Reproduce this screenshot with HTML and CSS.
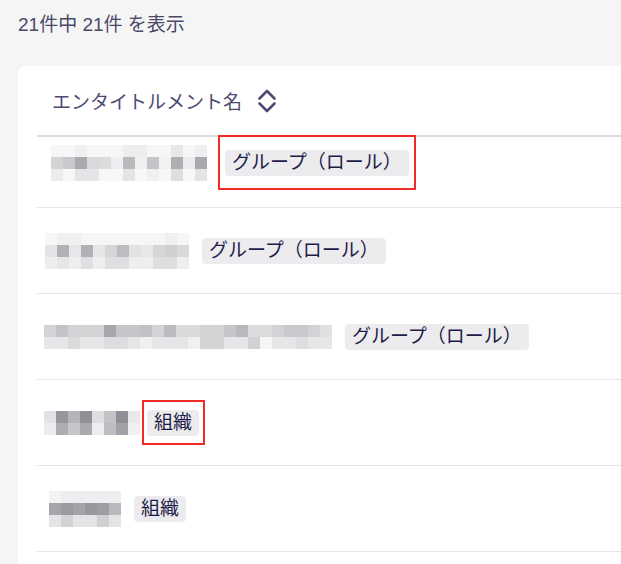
FILE: index.html
```html
<!DOCTYPE html>
<html lang="ja">
<head>
  <meta charset="utf-8">
  <title>エンタイトルメント</title>
  <link rel="stylesheet" href="styles.css">
</head>
<body>
  <p class="summary">21件中 21件 を表示</p>

  <div class="card">
    <div class="head">
      <span class="head-label">エンタイトルメント名</span>
      <svg class="sort" width="20" height="24" viewBox="0 0 20 24" fill="none" stroke="currentColor" stroke-width="2.6" stroke-linecap="round" stroke-linejoin="round">
        <path d="M2.5 9.5 L10 2 L17.5 9.5"/>
        <path d="M2.5 14.5 L10 22 L17.5 14.5"/>
      </svg>
    </div>

    <!-- 名前はモザイク処理 -->
    <div class="row row-first">
      <div class="cell">
        <svg class="blur m1" width="156" height="36" viewBox="0 0 13 3" shape-rendering="crispEdges">
          <rect width="13" height="1" fill="#f6f6f7"/>
          <rect x="2" width="1" height="1" fill="#efeff1"/><rect x="6" width="2" height="1" fill="#ededef"/><rect x="10" width="1" height="1" fill="#e8e8ea"/><rect x="12" width="1" height="1" fill="#efeff1"/>
          <rect y="1" width="1" height="1" fill="#d4d4d7"/><rect x="1" y="1" width="1" height="1" fill="#c9c9cd"/><rect x="2" y="1" width="1" height="1" fill="#a9a9af"/><rect x="3" y="1" width="1" height="1" fill="#d9d9dc"/><rect x="4" y="1" width="1" height="1" fill="#dcdcdf"/><rect x="5" y="1" width="1" height="1" fill="#eeeef0"/><rect x="6" y="1" width="1" height="1" fill="#b9b9be"/><rect x="7" y="1" width="1" height="1" fill="#f0f0f0"/><rect x="8" y="1" width="1" height="1" fill="#c4c4c8"/><rect x="9" y="1" width="1" height="1" fill="#f1f1f1"/><rect x="10" y="1" width="1" height="1" fill="#aeaeb3"/><rect x="11" y="1" width="1" height="1" fill="#ececee"/><rect x="12" y="1" width="1" height="1" fill="#a9a9ae"/>
          <rect y="2" width="13" height="1" fill="#f7f7f8"/>
          <rect y="2" width="1" height="1" fill="#ececee"/><rect x="2" y="2" width="2" height="1" fill="#e5e5e7"/><rect x="6" y="2" width="1" height="1" fill="#e4e4e6"/><rect x="8" y="2" width="1" height="1" fill="#f0f0f2"/><rect x="10" y="2" width="1" height="1" fill="#dedee1"/><rect x="12" y="2" width="1" height="1" fill="#e4e4e6"/>
        </svg>
        <span class="tag flag flag-wide">グループ（ロール）</span>
      </div>
    </div>

    <div class="row">
      <div class="cell">
        <svg class="blur m2" width="144" height="36" viewBox="0 0 12 3" shape-rendering="crispEdges">
          <rect width="12" height="1" fill="#f6f6f7"/>
          <rect x="1" width="2" height="1" fill="#f0f0f1"/><rect x="10" width="1" height="1" fill="#efeff0"/>
          <rect y="1" width="1" height="1" fill="#e4e4e6"/><rect x="1" y="1" width="1" height="1" fill="#b0b0b5"/><rect x="2" y="1" width="1" height="1" fill="#e7e7e9"/><rect x="3" y="1" width="1" height="1" fill="#b1b1b6"/><rect x="4" y="1" width="1" height="1" fill="#e6e6e8"/><rect x="5" y="1" width="1" height="1" fill="#d6d6d9"/><rect x="6" y="1" width="1" height="1" fill="#bdbdc1"/><rect x="7" y="1" width="1" height="1" fill="#e3e3e5"/><rect x="8" y="1" width="1" height="1" fill="#e8e8ea"/><rect x="9" y="1" width="1" height="1" fill="#d6d6d9"/><rect x="10" y="1" width="1" height="1" fill="#cfcfd2"/><rect x="11" y="1" width="1" height="1" fill="#d9d9dc"/>
          <rect y="2" width="12" height="1" fill="#eeeef0"/>
          <rect x="1" y="2" width="1" height="1" fill="#e6e6e8"/><rect x="3" y="2" width="1" height="1" fill="#e0e0e2"/><rect x="5" y="2" width="2" height="1" fill="#dfdfe2"/><rect x="9" y="2" width="2" height="1" fill="#dedee1"/>
        </svg>
        <span class="tag">グループ（ロール）</span>
      </div>
    </div>

    <div class="row">
      <div class="cell">
        <svg class="blur m3" width="288" height="24" viewBox="0 0 24 2" shape-rendering="crispEdges">
          <rect width="24" height="1" fill="#d3d3d6"/>
          <rect x="1" width="1" height="1" fill="#c3c3c7"/><rect x="5" width="1" height="1" fill="#a6a6ac"/><rect x="6" width="2" height="1" fill="#c6c6ca"/><rect x="8" width="1" height="1" fill="#c2c2c6"/><rect x="10" width="1" height="1" fill="#bcbcc0"/><rect x="11" width="2" height="1" fill="#dadadd"/><rect x="15" width="1" height="1" fill="#c6c6ca"/><rect x="16" width="1" height="1" fill="#b9b9bd"/><rect x="17" width="2" height="1" fill="#dbdbde"/><rect x="20" width="2" height="1" fill="#c9c9cd"/><rect x="23" width="1" height="1" fill="#e0e0e2"/>
          <rect y="1" width="24" height="1" fill="#e6e6e8"/>
          <rect x="2" y="1" width="1" height="1" fill="#dadadd"/><rect x="5" y="1" width="2" height="1" fill="#dddde0"/><rect x="8" y="1" width="1" height="1" fill="#f0f0f1"/><rect x="12" y="1" width="1" height="1" fill="#f0f0f1"/><rect x="13" y="1" width="2" height="1" fill="#d5d5d8"/><rect x="17" y="1" width="1" height="1" fill="#d2d2d5"/><rect x="18" y="1" width="1" height="1" fill="#f6f6f6"/><rect x="21" y="1" width="1" height="1" fill="#dedee1"/>
        </svg>
        <span class="tag">グループ（ロール）</span>
      </div>
    </div>

    <div class="row">
      <div class="cell">
        <svg class="blur m4" width="96" height="24" viewBox="0 0 8 2" shape-rendering="crispEdges">
          <rect y="0" width="1" height="1" fill="#e2e2e4"/><rect x="1" width="1" height="1" fill="#95959c"/><rect x="2" width="1" height="1" fill="#b5b5b9"/><rect x="3" width="1" height="1" fill="#909097"/><rect x="4" width="1" height="1" fill="#dedee0"/><rect x="5" width="1" height="1" fill="#c3c3c7"/><rect x="6" width="1" height="1" fill="#8f8f96"/><rect x="7" width="1" height="1" fill="#e8e8ea"/>
          <rect y="1" width="1" height="1" fill="#ececee"/><rect x="1" y="1" width="1" height="1" fill="#adadb2"/><rect x="2" y="1" width="1" height="1" fill="#c6c6ca"/><rect x="3" y="1" width="1" height="1" fill="#a9a9ae"/><rect x="4" y="1" width="1" height="1" fill="#ededef"/><rect x="5" y="1" width="1" height="1" fill="#bdbdc1"/><rect x="6" y="1" width="1" height="1" fill="#a1a1a7"/><rect x="7" y="1" width="1" height="1" fill="#f0f0f0"/>
        </svg>
        <span class="tag flag flag-narrow">組織</span>
      </div>
    </div>

    <div class="row">
      <div class="cell">
        <svg class="blur m5" width="72" height="36" viewBox="0 0 6 3" shape-rendering="crispEdges">
          <rect width="6" height="1" fill="#eeeef0"/><rect width="1" height="1" fill="#f4f4f5"/>
          <rect y="1" width="1" height="1" fill="#a5a5ab"/><rect x="1" y="1" width="1" height="1" fill="#9a9aa1"/><rect x="2" y="1" width="1" height="1" fill="#a3a3a9"/><rect x="3" y="1" width="1" height="1" fill="#97979e"/><rect x="4" y="1" width="1" height="1" fill="#9d9da3"/><rect x="5" y="1" width="1" height="1" fill="#b9b9bd"/>
          <rect y="2" width="6" height="1" fill="#e4e4e6"/><rect x="1" y="2" width="1" height="1" fill="#d3d3d6"/><rect x="4" y="2" width="1" height="1" fill="#d0d0d3"/>
        </svg>
        <span class="tag">組織</span>
      </div>
    </div>
  </div>
</body>
</html>
```

FILE: styles.css
```css
* { margin: 0; padding: 0; box-sizing: border-box; }

body {
  background: #f5f5f6;
  font-family: "Liberation Sans", "Noto Sans CJK JP", sans-serif;
  color: #1d1b48;
  overflow: hidden;
}

/* 件数 */
.summary {
  padding: 11px 18px 0;
  font-size: 19px;
  line-height: 28px;
  color: #4b4868;
}

/* テーブル */
.card {
  margin: 27px 0 0 18px;
  padding-left: 19px;
  min-height: calc(100vh - 66px);
  background: #fff;
  border-radius: 8px 0 0 0;
}

.head {
  display: flex;
  align-items: center;
  gap: 15px;
  height: 71px;
  padding-left: 15px;
  border-bottom: 2px solid #dcdcde;
  color: #4e4a72;
}
.head-label { font-size: 19px; }
.sort { display: block; }

.row {
  display: flex;
  align-items: center;
  height: 86px;
  padding-left: 7px;
  border-bottom: 1px solid #e3e5eb;
}
.row-first {
  height: 71px;
  align-items: flex-start;
  padding-top: 8px;
}

.cell { display: flex; align-items: center; gap: 13px; }
.blur { display: block; }
.m1 { margin-left: 7px; }
.m2 { margin-left: 1px; }
.m5 { margin-left: 5px; }

.tag {
  display: inline-block;
  height: 26px;
  padding: 0 7px;
  font-size: 19px;
  line-height: 26px;
  color: #1d1b48;
  background: #ececef;
  border-radius: 4px;
  white-space: nowrap;
}

/* 赤枠の注記 */
.flag { position: relative; }
.flag::after {
  content: "";
  position: absolute;
  border: 2px solid #ee2b26;
}
.flag-wide { margin-left: 5px; }
.flag-wide::after { top: -15px; bottom: -14px; left: -7px; right: -7px; }
.flag-narrow { margin-left: -6px; }
.flag-narrow::after { top: -10px; bottom: -9px; left: -5px; right: -6px; }
```
